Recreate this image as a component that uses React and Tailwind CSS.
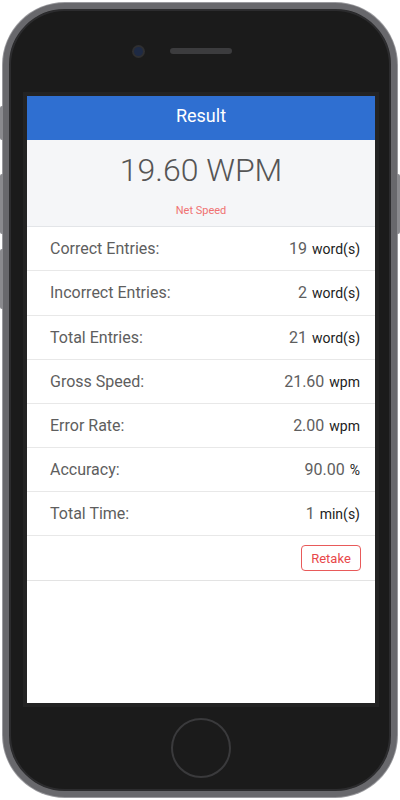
const rows = [
  { label: 'Correct Entries:', value: '19', unit: 'word(s)', h: 'h-[44px]' },
  { label: 'Incorrect Entries:', value: '2', unit: 'word(s)', h: 'h-[45px]' },
  { label: 'Total Entries:', value: '21', unit: 'word(s)', h: 'h-[44px]' },
  { label: 'Gross Speed:', value: '21.60', unit: 'wpm', h: 'h-[44px]' },
  { label: 'Error Rate:', value: '2.00', unit: 'wpm', h: 'h-[44px]' },
  { label: 'Accuracy:', value: '90.00', unit: '%', h: 'h-[44px]' },
  { label: 'Total Time:', value: '1', unit: 'min(s)', h: 'h-[44px]' },
];

function ResultScreen() {
  return (
    <div className="w-[348px] h-[607px] bg-white flex flex-col outline-[4px] outline-[#232323]">
      <div className="h-[44px] shrink-0 bg-[#2f6fd1] flex items-center justify-center pb-[5px] text-white text-[18px]">
        Result
      </div>

      <div className="h-[87px] shrink-0 bg-[#f5f6f8] border-b border-[#e3e5e8] flex flex-col items-center">
        <div className="mt-[10px] text-[32px] font-light text-[#555] leading-[40px]">19.60 WPM</div>
        <div className="mt-[14px] text-[11px] text-[#f07272] leading-[14px]">Net Speed</div>
      </div>

      {rows.map((r) => (
        <div
          key={r.label}
          className={`${r.h} shrink-0 border-b border-[#e8e8e8] flex items-center justify-between pl-[23px] pr-[15px]`}
        >
          <span className="text-[16px] text-[#5e5e5e]">{r.label}</span>
          <span className="flex items-baseline gap-[5px]">
            <span className="text-[16px] text-[#5e5e5e]">{r.value}</span>
            <span className="text-[14px] text-[#222]">{r.unit}</span>
          </span>
        </div>
      ))}

      <div className="h-[45px] shrink-0 border-b border-[#e3e3e3] flex items-center justify-end pr-[14px]">
        <button className="w-[60px] h-[26px] rounded-[4px] border border-[#e85a5a] text-[#e8484a] text-[13px] leading-none">
          Retake
        </button>
      </div>
    </div>
  );
}

export default function App() {
  return (
    <div
      className="w-[400px] h-[800px] bg-white pt-[3px] pl-[3px]"
      style={{ fontFamily: 'Roboto, "Noto Sans", sans-serif' }}
    >
      <div className="relative w-[394px] h-[794px] rounded-[62px] border-[6px] border-[#68686c] bg-[#1b1b1b] shadow-[inset_0_0_0_2px_#2c2c2e,0_0_0_1px_#9a9a9e]">
        {/* side buttons */}
        <div className="absolute -left-[9px] top-[97px] w-[3px] h-[34px] rounded-l-[2px] bg-[#8a8a8e]" />
        <div className="absolute -left-[9px] top-[165px] w-[3px] h-[60px] rounded-l-[2px] bg-[#8a8a8e]" />
        <div className="absolute -left-[9px] top-[240px] w-[3px] h-[60px] rounded-l-[2px] bg-[#8a8a8e]" />
        <div className="absolute -right-[9px] top-[165px] w-[3px] h-[60px] rounded-r-[2px] bg-[#8a8a8e]" />

        <div className="flex flex-col pl-[18px] pr-[16px]">
          <div className="h-[87px] flex items-start justify-center pt-[38px] gap-[27px]">
            <div className="w-[9px] h-[9px] rounded-full bg-[#1e2a44] shadow-[0_0_0_2px_#2f2f31]" />
            <div className="mt-[1px] w-[62px] h-[6px] rounded-full bg-[#3c3c3e]" />
            <div className="w-[9px] h-[9px]" />
          </div>

          <ResultScreen />

          <div className="h-[88px] flex items-center justify-center pt-[2px]">
            <div className="w-[60px] h-[60px] rounded-full border-2 border-[#3a3a3c]" />
          </div>
        </div>
      </div>
    </div>
  );
}
